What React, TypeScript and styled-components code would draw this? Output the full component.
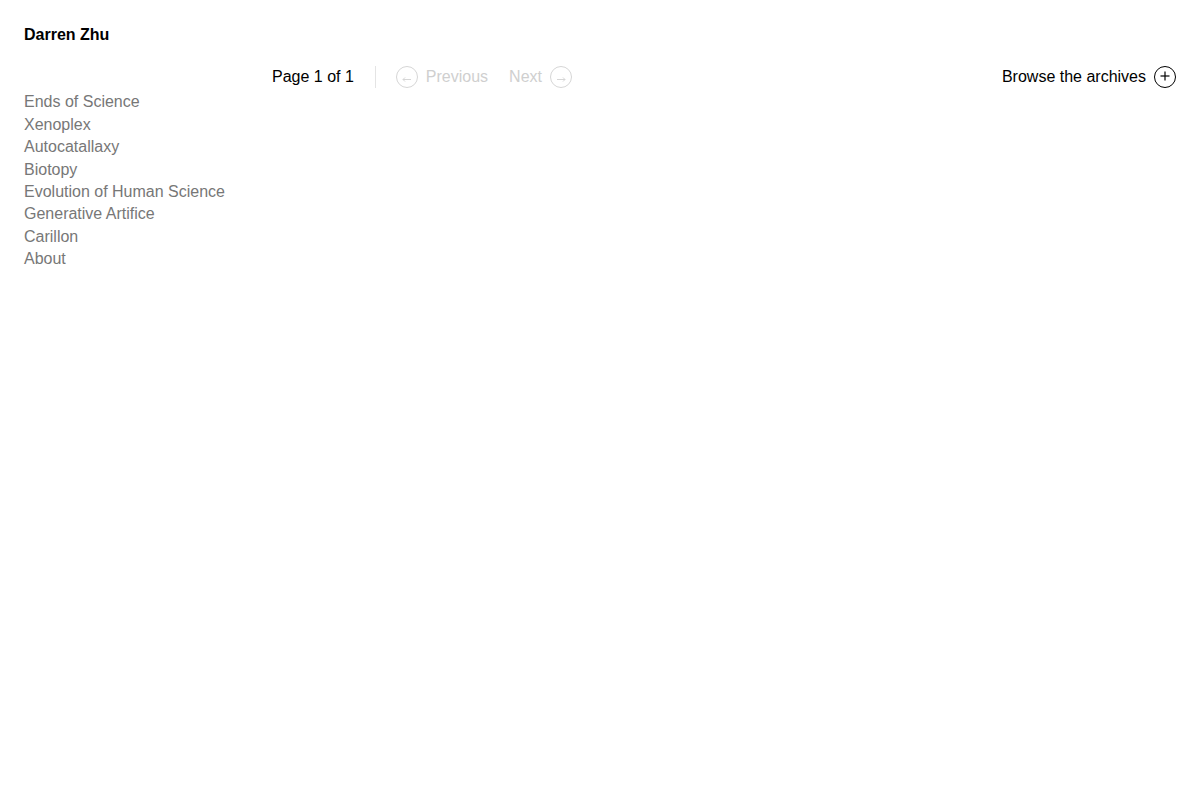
import { FC } from "react";
import styled, { createGlobalStyle } from "styled-components";

const GlobalStyle = createGlobalStyle`
  html, body {
    margin: 0;
    padding: 0;
    background: #fff;
  }
  body {
    font-family: "Liberation Sans", Arial, sans-serif;
    font-size: 16px;
    line-height: 1.4;
    color: #000;
  }
`;

const Page = styled.div`
  padding: 24px 24px 24px;
`;

const SiteTitle = styled.a`
  display: block;
  font-weight: 700;
  color: #000;
  text-decoration: none;
`;

const Layout = styled.div`
  display: grid;
  grid-template-columns: 248px 1fr;
`;

const Sidebar = styled.nav`
  display: flex;
  flex-direction: column;
  padding-top: 45px;
`;

const NavLink = styled.a`
  color: #777;
  text-decoration: none;
`;

const Main = styled.main`
  padding-top: 20px;
`;

const Toolbar = styled.div`
  display: flex;
  align-items: center;
  height: 22px;
`;

const PageCount = styled.span`
  color: #000;
`;

const Divider = styled.span`
  width: 1px;
  height: 22px;
  background: #e4e4e4;
  margin: 0 20px 0 21px;
`;

const PagerLink = styled.span<{ disabled?: boolean }>`
  display: flex;
  align-items: center;
  gap: 8px;
  color: ${(p) => (p.disabled ? "#cfcfcf" : "#000")};
  & + & {
    margin-left: 21px;
  }
`;

const Spacer = styled.div`
  flex: 1;
`;

const ArchiveLink = styled.a`
  display: flex;
  align-items: center;
  gap: 8px;
  color: #000;
  text-decoration: none;
`;

type CircleIconProps = { kind: "prev" | "next" | "plus"; color: string };

const CircleIcon: FC<CircleIconProps> = ({ kind, color }) => (
  <svg width="22" height="22" viewBox="0 0 22 22" fill="none" stroke={color} strokeWidth="1">
    <circle cx="11" cy="11" r="10.5" />
    {kind === "prev" && (
      <>
        <path d="M7 13.5h8" />
        <path d="M9 11.5l-2 2 2 2" />
      </>
    )}
    {kind === "next" && (
      <>
        <path d="M7 13.5h8" />
        <path d="M13 11.5l2 2-2 2" />
      </>
    )}
    {kind === "plus" && (
      <>
        <path d="M11 5.5v9" strokeWidth="1.2" />
        <path d="M6.5 10h9" strokeWidth="1.2" />
      </>
    )}
  </svg>
);

const links = [
  "Ends of Science",
  "Xenoplex",
  "Autocatallaxy",
  "Biotopy",
  "Evolution of Human Science",
  "Generative Artifice",
  "Carillon",
  "About",
];

const App: FC = () => (
  <>
    <GlobalStyle />
    <Page>
      <SiteTitle href="#">Darren Zhu</SiteTitle>
      <Layout>
        <Sidebar>
          {links.map((l) => (
            <NavLink key={l} href="#">
              {l}
            </NavLink>
          ))}
        </Sidebar>
        <Main>
          <Toolbar>
            <PageCount>Page 1 of 1</PageCount>
            <Divider />
            <PagerLink disabled>
              <CircleIcon kind="prev" color="#d6d6d6" />
              Previous
            </PagerLink>
            <PagerLink disabled>
              Next
              <CircleIcon kind="next" color="#d6d6d6" />
            </PagerLink>
            <Spacer />
            <ArchiveLink href="#">
              Browse the archives
              <CircleIcon kind="plus" color="#000" />
            </ArchiveLink>
          </Toolbar>
        </Main>
      </Layout>
    </Page>
  </>
);

export default App;
